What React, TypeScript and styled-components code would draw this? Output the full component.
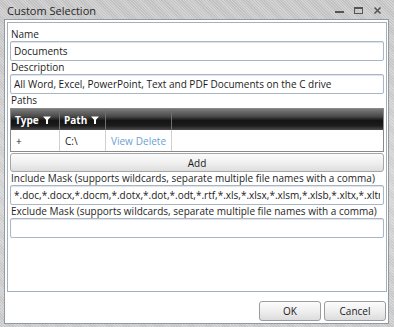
import React from 'react';
import styled, { createGlobalStyle } from 'styled-components';

const GlobalStyle = createGlobalStyle`
    html, body {
        margin: 0;
        padding: 0;
        background: #ffffff;
    }
    * {
        box-sizing: border-box;
    }
`;

const FONT = `'Open Sans', 'Liberation Sans', sans-serif`;

interface Column {
    title: string;
    width: number;
    filter?: boolean;
}

const columns: Column[] = [
    { title: 'Type', width: 49, filter: true },
    { title: 'Path', width: 46, filter: true },
    { title: '', width: 66 },
    { title: '', width: 0 },
];

const includeMask =
    '*.doc,*.docx,*.docm,*.dotx,*.dot,*.odt,*.rtf,*.xls,*.xlsx,*.xlsm,*.xlsb,*.xltx,*.xltm,*.xlt,*.xml,*.ods,*.ppt,*.pptx,*.pdf,*.txt';

const FilterIcon = () => (
    <svg width="8" height="8" viewBox="0 0 8 8">
        <path d="M0 0.5h8l-3 3.2v4.3h-2v-4.3z" fill="#ffffff" />
    </svg>
);

const WindowControls = () => (
    <Controls>
        <svg width="10" height="10" viewBox="0 0 10 10">
            <rect x="0" y="5" width="9" height="2" fill="#555" />
        </svg>
        <svg width="10" height="10" viewBox="0 0 10 10">
            <rect x="0.5" y="1.5" width="8" height="6" fill="none" stroke="#555" />
            <rect x="0.5" y="1.5" width="8" height="1.5" fill="#555" />
        </svg>
        <svg width="10" height="10" viewBox="0 0 10 10">
            <path d="M1.5 1.5l6 6M7.5 1.5l-6 6" stroke="#555" strokeWidth="1.6" />
        </svg>
    </Controls>
);

const App: React.FunctionComponent = () => {
    return (
        <>
            <GlobalStyle />
            <Window>
                <TitleBar>
                    <Title>Custom Selection</Title>
                    <WindowControls />
                </TitleBar>
                <Panel>
                    <FormBox>
                        <Label>Name</Label>
                        <TextBox readOnly value="Documents" />
                        <Label>Description</Label>
                        <TextBox
                            readOnly
                            value="All Word, Excel, PowerPoint, Text and PDF Documents on the C drive"
                        />
                        <Label>Paths</Label>
                        <Grid>
                            <HeaderRow>
                                {columns.map((c, i) => (
                                    <HeaderCell key={i} $width={c.width}>
                                        {c.title}
                                        {c.filter && <FilterIcon />}
                                    </HeaderCell>
                                ))}
                            </HeaderRow>
                            <DataRow>
                                <Cell $width={49}>+</Cell>
                                <Cell $width={46}>C:\</Cell>
                                <Cell $width={66}>
                                    <LinkText>View</LinkText>
                                    <LinkText>Delete</LinkText>
                                </Cell>
                                <Cell $width={0} />
                            </DataRow>
                        </Grid>
                        <AddButton>Add</AddButton>
                        <Label>
                            Include Mask (supports wildcards, separate multiple file names with a comma)
                        </Label>
                        <TextBox readOnly value={includeMask} />
                        <Label>
                            Exclude Mask (supports wildcards, separate multiple file names with a comma)
                        </Label>
                        <TextBox readOnly value="" />
                    </FormBox>
                    <ButtonRow>
                        <DialogButton>OK</DialogButton>
                        <DialogButton>Cancel</DialogButton>
                    </ButtonRow>
                </Panel>
            </Window>
        </>
    );
};

export default App;

const Window = styled.div`
    width: 394px;
    height: 327px;
    display: flex;
    flex-direction: column;
    padding: 0 5px 3px 4px;
    background: repeating-linear-gradient(
            45deg,
            rgba(255, 255, 255, 0.18) 0 1px,
            rgba(0, 0, 0, 0.04) 1px 2px
        ),
        linear-gradient(#c9c9c9, #d8d8d8 55%, #cdcdcd);
    font-family: ${FONT};
`;

const TitleBar = styled.div`
    height: 19px;
    flex: none;
    display: flex;
    align-items: center;
    justify-content: space-between;
    padding: 1px 6px 0 3px;
`;

const Title = styled.div`
    font-size: 11px;
    color: #262626;
`;

const Controls = styled.div`
    display: flex;
    align-items: center;
    gap: 9px;
    margin-top: 2px;
`;

const Panel = styled.div`
    flex: 1;
    display: flex;
    flex-direction: column;
    background: #ffffff;
    border: 1px solid #8f9aa5;
    padding: 2px 1px 0 2px;
`;

const FormBox = styled.div`
    flex: 1;
    display: flex;
    flex-direction: column;
    border: 1px solid #a3afbb;
    padding: 5px 2px 0 2px;
`;

const Label = styled.div`
    height: 13px;
    line-height: 13px;
    font-size: 10px;
    color: #1e1e1e;
    padding-left: 1px;
    white-space: nowrap;
`;

const TextBox = styled.input`
    height: 20px;
    width: 100%;
    border: 1px solid #a9b6c3;
    border-radius: 2px;
    box-shadow: inset 0 1px 1px rgba(120, 140, 160, 0.25);
    padding: 0 3px;
    font-family: ${FONT};
    font-size: 10px;
    color: #1a1a1a;
    background: #ffffff;
    outline: none;
`;

const Grid = styled.div`
    margin-top: 1px;
    border: 1px solid #8a8a8a;
    display: flex;
    flex-direction: column;
`;

const HeaderRow = styled.div`
    height: 21px;
    display: flex;
    background: linear-gradient(#7a7a7a 0%, #4a4a4a 35%, #141414 55%, #1c1c1c 80%, #4c4c4c 100%);
`;

const HeaderCell = styled.div<{ $width: number }>`
    ${props => (props.$width ? `width: ${props.$width}px;` : 'flex: 1;')}
    display: flex;
    align-items: center;
    gap: 4px;
    padding-left: 4px;
    border-right: 1px solid #6e6e6e;
    color: #ffffff;
    font-size: 10px;
    font-weight: bold;

    &:last-child {
        border-right: none;
    }
`;

const DataRow = styled.div`
    height: 21px;
    display: flex;
    background: #ffffff;
`;

const Cell = styled.div<{ $width: number }>`
    ${props => (props.$width ? `width: ${props.$width}px;` : 'flex: 1;')}
    display: flex;
    align-items: center;
    gap: 3px;
    padding-left: 5px;
    border-right: 1px solid #d0d0d0;
    font-size: 10px;
    color: #1a1a1a;

    &:last-child {
        border-right: none;
    }
`;

const LinkText = styled.span`
    color: #6a9fd6;
`;

const AddButton = styled.div`
    height: 19px;
    margin-top: 1px;
    display: flex;
    align-items: center;
    justify-content: center;
    border: 1px solid #a6a6a6;
    border-radius: 3px;
    background: linear-gradient(#fbfbfb, #f0f0f0 50%, #dedede);
    font-size: 10px;
    color: #1a1a1a;
`;

const ButtonRow = styled.div`
    display: flex;
    justify-content: flex-end;
    gap: 3px;
    padding: 9px 1px 2px 0;
`;

const DialogButton = styled.div`
    width: 62px;
    height: 20px;
    display: flex;
    align-items: center;
    justify-content: center;
    border: 1px solid #9c9c9c;
    border-radius: 3px;
    background: linear-gradient(#fcfcfc, #efefef 50%, #dcdcdc);
    font-size: 10px;
    color: #1a1a1a;
`;
